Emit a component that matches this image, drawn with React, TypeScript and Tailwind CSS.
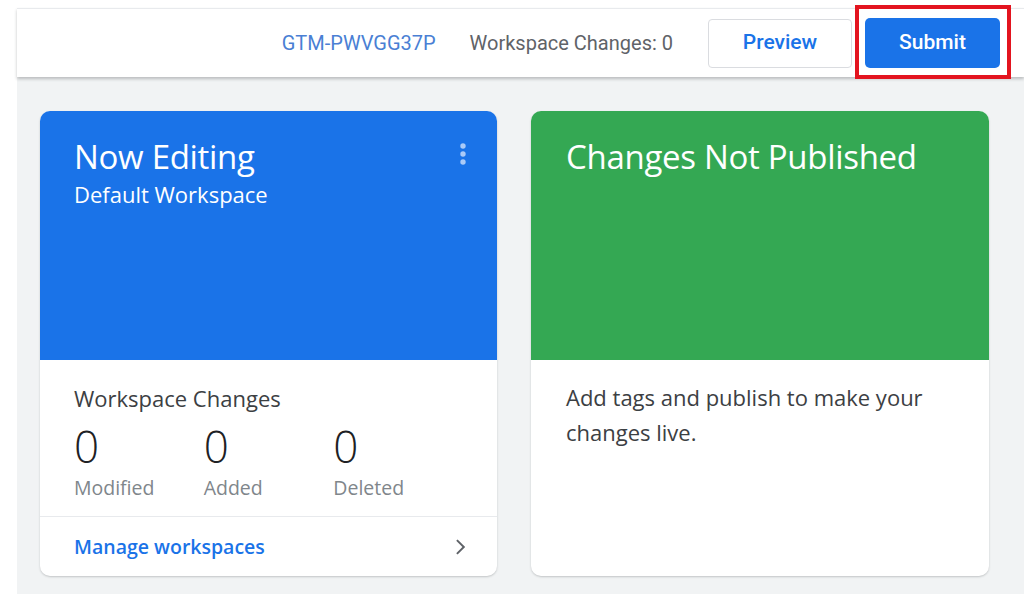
import React from 'react';

const cardFont = { fontFamily: '"Open Sans", Roboto, sans-serif' };

const StatBlock = ({ value, label }: { value: number; label: string }) => (
  <div className="w-[130px]">
    <div className="text-[44px] leading-[48px] font-light text-[#202124]">{value}</div>
    <div className="text-[19.5px] leading-[26px] text-[#80868b] mt-[5px]">{label}</div>
  </div>
);

export default function App() {
  return (
    <div className="w-[1024px] h-[594px] bg-white overflow-hidden font-['Roboto',sans-serif]">
      <div className="ml-[17px] h-full flex flex-col">
        {/* Top bar */}
        <header className="relative z-10 mt-[8px] h-[69px] border-t border-[#e8eaed] bg-white shadow-[0_2px_3px_rgba(60,64,67,0.3)] flex items-center justify-end pr-[24px] shrink-0">
          <span className="text-[20px] text-[#4a7fd4]">GTM-PWVGG37P</span>
          <span className="ml-[34px] text-[20px] text-[#5f6368]">Workspace Changes: 0</span>
          <button className="ml-[35px] w-[144px] h-[49px] rounded-[4px] border border-[#dadce0] bg-white text-[21px] font-medium text-[#1a73e8]">
            Preview
          </button>
          <div className="relative ml-[13px]">
            <button className="w-[135px] h-[50px] rounded-[5px] bg-[#1a73e8] text-[21px] font-medium text-white">
              Submit
            </button>
            <div className="absolute -left-[10px] -top-[13px] w-[156px] h-[74px] border-[4px] border-[#e3141f] pointer-events-none" />
          </div>
        </header>

        {/* Content */}
        <main className="flex-1 bg-[#f1f3f4] pt-[34px] pl-[23px] pr-[26px] flex gap-[34px]" style={cardFont}>
          {/* Now Editing card */}
          <div className="w-[457px] h-[465px] rounded-[10px] bg-white shadow-[0_1px_2px_rgba(60,64,67,0.25)] overflow-hidden flex flex-col">
            <div className="h-[249px] bg-[#1a73e8] pl-[34px] pr-[30px] pt-[25px] flex justify-between text-white">
              <div>
                <div className="text-[33px] leading-[42px] tracking-[-0.3px]">Now Editing</div>
                <div className="text-[22px] leading-[30px] mt-[1px]">Default Workspace</div>
              </div>
              <svg width="8" height="24" viewBox="0 0 8 24" className="mt-[6px] opacity-70">
                <circle cx="4" cy="4" r="2.7" fill="#e8f0fe" />
                <circle cx="4" cy="12" r="2.7" fill="#e8f0fe" />
                <circle cx="4" cy="20" r="2.7" fill="#e8f0fe" />
              </svg>
            </div>
            <div className="flex-1 flex flex-col">
              <div className="px-[34px] pt-[23px] h-[157px] border-b border-[#e8eaed]">
                <div className="text-[22px] leading-[30px] text-[#3c4043]">Workspace Changes</div>
                <div className="flex mt-[9px]">
                  <StatBlock value={0} label="Modified" />
                  <StatBlock value={0} label="Added" />
                  <StatBlock value={0} label="Deleted" />
                </div>
              </div>
              <div className="flex-1 flex items-center justify-between pl-[34px] pr-[24px]">
                <span className="text-[19.5px] font-semibold text-[#1a73e8]">Manage workspaces</span>
                <svg width="24" height="24" viewBox="0 0 24 24" className="text-[#5f6368]">
                  <path d="M8.6 4.4 7.2 5.8 13.4 12l-6.2 6.2 1.4 1.4L16.2 12z" fill="currentColor" />
                </svg>
              </div>
            </div>
          </div>

          {/* Changes Not Published card */}
          <div className="w-[458px] h-[465px] rounded-[10px] bg-white shadow-[0_1px_2px_rgba(60,64,67,0.25)] overflow-hidden flex flex-col">
            <div className="h-[249px] bg-[#34a853] px-[35px] pt-[25px] text-white">
              <div className="text-[33px] leading-[42px] tracking-[-0.3px]">Changes Not Published</div>
            </div>
            <div className="px-[35px] pt-[20px] text-[22px] leading-[35px] text-[#3c4043]">
              Add tags and publish to make your
              <br />
              changes live.
            </div>
          </div>
        </main>
      </div>
    </div>
  );
}
